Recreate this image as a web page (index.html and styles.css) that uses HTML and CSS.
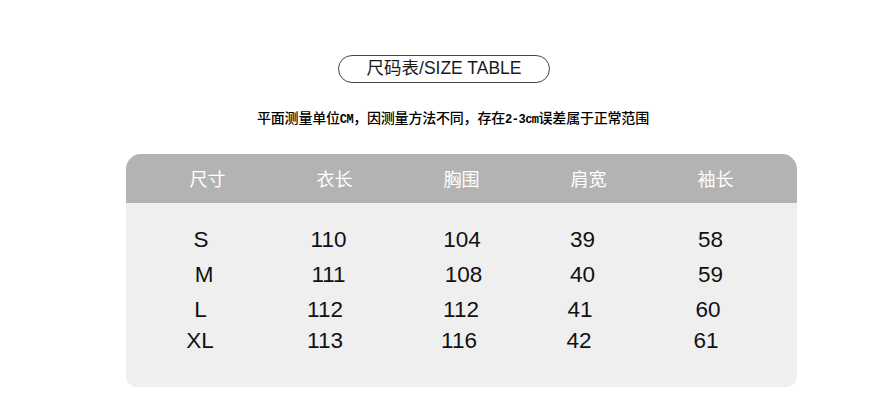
FILE: index.html
```html
<!DOCTYPE html>
<html lang="zh">
<head>
<meta charset="utf-8">
<title>尺码表</title>
<link rel="stylesheet" href="styles.css">
</head>
<body>
<div class="page">
  <div class="title-wrap">
    <div class="pill">尺码表/SIZE TABLE</div>
  </div>
  <p class="note">平面测量单位<span class="lat">CM</span>，因测量方法不同，存在<span class="lat">2-3cm</span>误差属于正常范围</p>
  <div class="table">
    <div class="head">
      <div class="cell">尺寸</div>
      <div class="cell">衣长</div>
      <div class="cell">胸围</div>
      <div class="cell">肩宽</div>
      <div class="cell">袖长</div>
    </div>
    <div class="body">
      <div class="row r1">
        <div class="cell">S</div><div class="cell">110</div><div class="cell">104</div><div class="cell">39</div><div class="cell">58</div>
      </div>
      <div class="row r2">
        <div class="cell">M</div><div class="cell">111</div><div class="cell">108</div><div class="cell">40</div><div class="cell">59</div>
      </div>
      <div class="row r3">
        <div class="cell">L</div><div class="cell">112</div><div class="cell">112</div><div class="cell">41</div><div class="cell">60</div>
      </div>
      <div class="row r4">
        <div class="cell">XL</div><div class="cell">113</div><div class="cell">116</div><div class="cell">42</div><div class="cell">61</div>
      </div>
    </div>
  </div>
</div>
</body>
</html>
```
FILE: styles.css
```css
html, body {
  margin: 0;
  padding: 0;
  background: #ffffff;
}
body {
  width: 876px;
  height: 419px;
  overflow: hidden;
  font-family: "Liberation Sans", Arial, "Noto Sans CJK SC", sans-serif;
  color: #111;
}
.page {
  display: flex;
  flex-direction: column;
  align-items: stretch;
  padding-top: 55px;
}
.title-wrap {
  display: flex;
  justify-content: flex-start;
  padding-left: 338px;
}
.pill {
  box-sizing: border-box;
  width: 212px;
  height: 28px;
  border: 1.6px solid #444;
  border-radius: 14px;
  font-family: "Liberation Sans", "Noto Sans CJK SC", sans-serif;
  font-size: 17.5px;
  line-height: 25px;
  text-align: center;
  color: #1a1a1a;
}
.note {
  margin: 0;
  padding-left: 257px;
  margin-top: 24px;
  font-family: "Noto Sans CJK SC", sans-serif;
  font-weight: 500;
  font-size: 14px;
  line-height: 20px;
  color: #000;
  letter-spacing: -0.2px;
}
.note .lat {
  font-family: "Liberation Mono", "Noto Sans CJK SC", monospace;
  font-weight: 700;
  font-size: 12px;
  letter-spacing: -0.5px;
}
.table {
  margin-top: 24px;
  margin-left: 126px;
  width: 671px;
  display: flex;
  flex-direction: column;
}
.head {
  height: 49px;
  background: #b3b3b3;
  border-radius: 15px 15px 0 0;
  display: grid;
  grid-template-columns: repeat(5, 127px);
  padding-left: 18px;
  align-items: center;
}
.head .cell {
  text-align: center;
  color: #ffffff;
  font-family: "Noto Sans CJK SC", sans-serif;
  font-size: 18px;
  line-height: 22px;
  padding-bottom: 1px;
}
.body {
  height: 184px;
  background: #efefef;
  border-radius: 0 0 11px 11px;
  padding-top: 19px;
  padding-left: 11px;
  box-sizing: border-box;
}
.row {
  display: grid;
  grid-template-columns: 128px 127px 140px 101px 155px;
  font-size: 22.5px;
  color: #111;
}
.row .cell {
  text-align: center;
}
.r1 { height: 35px; line-height: 35px; }
.r2 { height: 36px; line-height: 36px; }
.r3 { height: 33px; line-height: 33px; }
.r4 { height: 29px; line-height: 29px; }
.r2 .cell:nth-child(1) { padding-left: 6px; }
.r2 .cell:nth-child(3) { padding-left: 3px; }
.r3 .cell:nth-child(1) { padding-right: 1px; }
.r3 .cell:nth-child(2) { padding-right: 7px; }
.r3 .cell:nth-child(3) { padding-right: 2px; }
.r3 .cell:nth-child(4) { padding-right: 5px; }
.r3 .cell:nth-child(5) { padding-right: 5px; }
.r4 .cell:nth-child(1) { padding-right: 2px; }
.r4 .cell:nth-child(2) { padding-right: 7px; }
.r4 .cell:nth-child(3) { padding-right: 6px; }
.r4 .cell:nth-child(4) { padding-right: 7px; }
.r4 .cell:nth-child(5) { padding-right: 9px; }
```
